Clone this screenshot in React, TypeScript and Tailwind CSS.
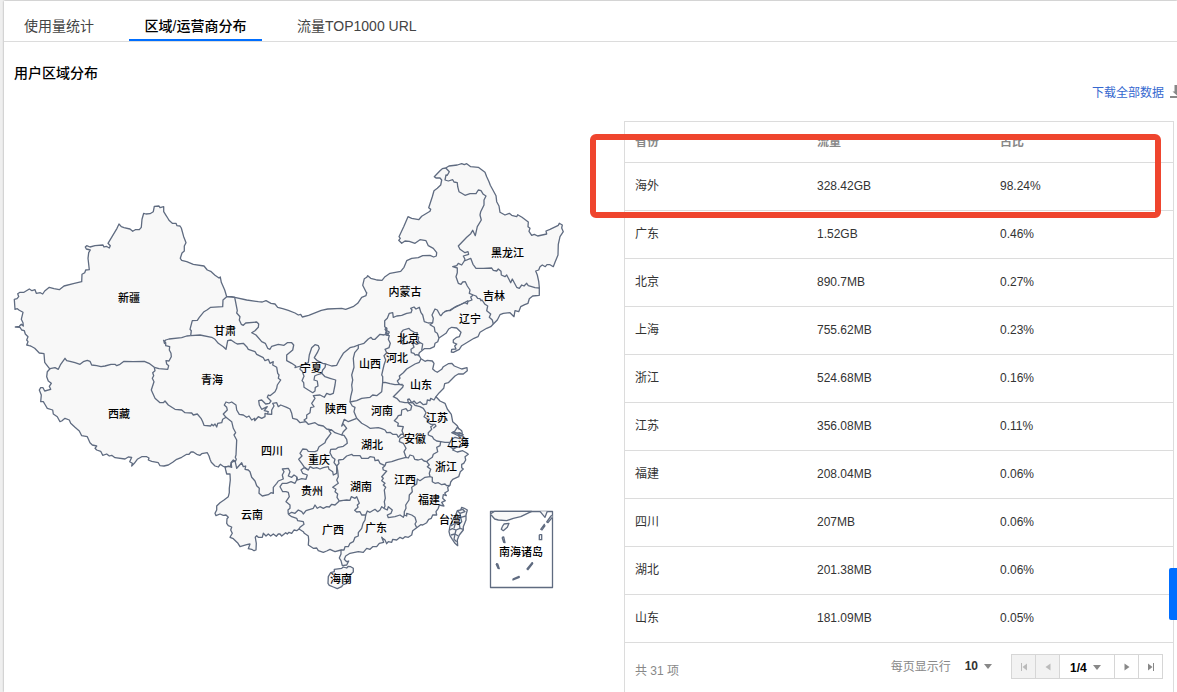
import React from "react";

type Point = [number, number];

// Border segments are stored in third-of-a-pixel units relative to a tile origin.
const seg = (ox: number, oy: number, data: string): Point[] =>
  data
    .trim()
    .split(/\s+/)
    .map((pair) => {
      const [x, y] = pair.split(",").map(Number);
      return [ox + x / 3, oy + y / 3] as Point;
    });

const toPath = (points: Point[], close = false) =>
  "M" + points.map(([x, y]) => `${x.toFixed(1)} ${y.toFixed(1)}`).join("L") + (close ? "Z" : "");

const nw = (d: string) => seg(0, 190, d);
const sw = (d: string) => seg(0, 340, d);
const mid = (d: string) => seg(180, 280, d);
const ne = (d: string) => seg(350, 150, d);
const east = (d: string) => seg(340, 300, d);
const south = (d: string) => seg(200, 400, d);
const se = (d: string) => seg(370, 400, d);

const mainland: Point[] = [
  ...nw(
    "148,535 134,517 132,491 118,489 104,475 92,468 88,467 80,465 84,455 80,450 84,440 76,432 73,422 65,420 60,412 46,411 58,409 64,403 70,408 69,398 64,388 69,367 58,361 52,356 45,358 43,328 51,326 56,320 53,311 60,307 72,307 88,297 96,302 105,299 109,310 121,308 128,312 134,303 148,292 162,296 178,299 192,288 220,281 245,275 246,253 254,248 257,240 268,239 264,205 266,188 271,180 259,177 256,171 260,167 270,171 285,167 309,165 312,171 319,169 328,174 331,167 324,160 342,130 351,115 357,102 364,110 372,113 390,117 398,124 406,119 418,119 424,112 426,88 431,70 438,72 450,71 460,65 463,49 477,48 480,53 491,50 491,65 498,76 503,84 507,91 517,100 528,100 531,107 540,108 544,114 551,140 554,148 558,158 553,168 553,183 546,189 541,205 545,211 560,215 580,223 612,228 622,240 632,244 645,256 657,264 661,261 664,277 674,300 680,320"
  ),
  ...mid(
    "164,52 200,60 235,65 247,66 258,62 273,70 285,72 293,82 308,86 325,91 345,99 355,105 362,103 367,111 386,106 424,91 443,87 485,85 497,88 521,79 533,70 545,52 558,47 560,38"
  ),
  ...ne(
    "50,430 38,406 43,386 50,382 53,377 62,385 74,388 80,390 96,391 105,380 120,370 152,364 162,352 170,332 185,325 205,323 218,317 240,316 251,321 259,318 260,308 250,295 235,287 228,272 210,269 195,280 178,274 165,273 155,280 146,271 151,265 147,260 161,230 174,200 185,205 206,209 215,199 240,184 242,178 236,173 247,140 252,122 262,115 272,105 275,90 270,84 258,84 253,80 270,62 277,56 287,54 297,48 322,45 335,41 343,44 350,41 362,50 385,52 405,67 410,80 417,95 421,106 430,122 438,137 440,155 447,168 450,187 465,195 478,190 485,196 500,200 503,194 516,202 535,216 534,230 540,235 537,244 545,256 553,253 563,258 590,252 588,243 600,238 625,226 628,220 637,225 635,234 640,245 630,260 625,283 624,315 615,337 610,350 600,344 591,344 586,350 577,345 570,350 566,360 557,363 562,375 566,394 568,412 568,436 548,438 538,446 534,460 524,464 512,470 506,485 495,482 492,500 480,488 460,490 450,494 442,510 430,522"
  ),
  ...east(
    "460,72 452,80 440,85 420,97 414,110 402,115 365,137 358,148 340,157 334,156 335,148 348,147 344,138 350,132 340,128 340,120 350,112 358,110 363,97 350,84 335,82 326,87 318,100 297,114 293,125 285,130 283,140 270,146 253,146 238,158 236,164 243,176 255,184 262,181 277,183 282,190 278,207 285,213 292,217 305,208 310,200 325,191 335,190 343,198 365,207 381,203 382,212 370,222 355,222 345,228 325,248 314,251 311,265 298,278 288,290 300,303 315,310 322,327 334,343 338,365 352,377 357,387"
  ),
  ...se(
    "262,82 275,92 277,100 266,102 250,95 245,98 260,105 278,108 290,120 287,132 272,140 256,143 248,150 262,156 278,152 289,158 295,163 285,170 287,180 281,190 275,193 275,203 280,207 271,215 266,230 248,238 242,246 240,256 233,262 235,272 224,279 229,287 220,284 218,295 226,302 215,307 222,318 208,315 205,325 198,335 200,345 188,345 184,355 176,358 170,368 158,375 152,374 140,383 128,392 125,405 115,412 105,410 98,416 90,412 80,420 68,418 65,427 55,425 50,431 45,420 38,415 35,412 41,427 28,430 20,440 8,440 0,448"
  ),
  ...south(
    "500,445 490,457 475,455 450,460 437,468 433,478 440,485 446,483 440,495 427,497 423,482 418,474 423,462 423,450 405,455 398,452 390,448 380,453 370,457 355,452 350,444 340,445 325,435 326,420 325,408 313,400 310,395 297,387 290,392 282,390 275,400 267,397 262,402 257,398 245,408 240,402 235,402 229,409 220,402 212,408 205,402 198,408 190,400 187,412 175,412 170,407 166,412 169,430 168,450 162,452 155,448 145,446 150,432 140,434 120,440 114,430 100,416 90,412 97,400 92,390 95,381 85,377 80,370 81,356 85,352 78,345 70,346 60,342 48,347 45,340 50,330 50,318 60,308 72,300 85,290 88,278 88,265 91,240 90,222 80,222 77,210 75,200"
  ),
  ...sw(
    "675,382 668,378 661,373 655,381 645,378 634,367 630,358 627,348 622,338 605,341 600,346 590,343 580,336 573,336 567,343 560,343 545,352 530,358 518,367 505,375 492,378 480,377 475,368 455,364 445,360 447,354 440,350 425,350 412,358 403,370 395,378 397,370 389,365 395,352 385,351 375,357 345,353 335,346 328,348 320,342 308,346 302,334 290,330 285,325 290,318 277,315 270,308 262,290 245,287 238,273 225,262 212,250 208,240 195,235 185,243 180,245 172,230 160,222 158,210 142,205 136,195 130,185 122,185 124,165 118,150 122,143 129,143 134,153 152,148 148,139 154,130 145,123 140,110 142,95 150,86"
  ),
];

const innerBorders: Point[][] = [
  sw(
    "150,86 165,83 175,88 182,73 195,55 200,62 210,64 225,68 240,73 250,65 262,61 270,64 275,75 290,77 303,80 315,78 333,73 345,73 350,77 360,73 372,64 400,65 433,64 447,70 463,82"
  ),
  sw(
    "463,82 465,92 458,98 461,107 457,115 462,125 454,150 465,175 480,188 490,188 495,183 505,195 525,208 545,210 555,218 575,219 580,225 592,222 603,235 608,245 612,256 632,258 635,253 640,257 645,252 650,261 653,250 665,248 668,238 678,232 695,245 700,265 707,278 702,285 710,300 708,345 706,352 709,358 706,365 700,360 693,368 695,382 685,378 675,382"
  ),
  sw("463,82 477,86 503,88 506,77 500,72 498,62 507,63 514,50 513,40 508,30 509,20 497,17 497,8 490,0"),
  nw("494,462 492,455 497,450 507,447 545,443 560,438 572,437"),
  nw("572,437 574,422 570,418 577,392 592,391 598,382 612,365 622,359 632,352 668,350 669,330 680,320 695,320 705,322"),
  mid(
    "164,52 172,92 170,99 180,110 178,120 184,133 190,136 197,129 230,126 236,132 235,142 225,152 215,158 228,165 245,185 256,190 263,205 270,208 275,199 295,193 312,196 322,188 335,188 341,195 338,210 320,225 320,242 335,250 347,258 345,263 362,258"
  ),
  mid(
    "362,258 385,248 388,225 395,203 405,194 415,197 418,205 412,218 403,233 412,242 428,250 437,252 435,262 428,270 425,280 410,285 404,288 402,300 412,303 414,318 406,322 405,333 398,338 385,330 372,322 371,308 366,302 372,289 367,274 360,268 362,258"
  ),
  mid(
    "425,280 435,290 450,295 467,300 465,315 460,340 450,344 440,340 433,352 420,345 400,347 405,355 395,370 402,380 392,383 390,398 380,405 380,415 372,420 378,425"
  ),
  mid("437,252 455,258 470,256 478,240 490,220 510,203 523,200 535,195 535,205 524,218 520,235 522,262 515,285 518,300 515,315 517,330 512,350 510,366 517,378 525,382 522,395 530,415"),
  mid("378,425 385,433 405,428 415,435 430,438 440,447 455,450 465,458 485,465 490,455 500,445 490,432 485,438 493,418 505,425 530,415"),
  mid("535,195 552,190 565,177 573,172 578,178 585,178 600,163 612,165 622,160 615,148 620,143"),
  east(
    "135,98 145,103 148,96 140,92 140,85 134,80 134,62 142,55 148,40 158,38 160,52 170,48 185,46 200,40 213,38 216,30 212,25 222,21 228,27 238,22 243,38 248,45 253,65 265,69 278,68 280,55 276,45 285,27 292,30 300,45 303,47 310,38 320,32 330,32 345,22 360,15 375,7 385,2"
  ),
  ne("283,485 300,480 320,468 335,462 345,458 352,462 354,454 366,450 362,441 370,435"),
  east("278,68 270,74 283,82 285,95 292,100 297,114"),
  ne(
    "287,54 293,60 298,65 292,76 288,75 285,90 295,93 308,89 312,96 322,98 323,110 327,125 335,130 345,136 360,131 378,131 385,120 393,122 400,133 408,138 402,150 402,165 392,185 390,195 394,210 382,230 376,257 368,241 362,251 350,262 325,288 330,298 345,308 354,305 356,313 340,318 345,328 343,333"
  ),
  ne(
    "343,333 362,325 369,343 378,355 400,355 425,354 430,361 440,363 445,357 453,364 454,375 465,380 470,375 482,398 487,387 500,412 508,415 515,405 522,408 530,400 535,407 545,410 555,413 568,414"
  ),
  ne("343,333 335,345 325,340 320,347 308,350 322,354 322,368 318,380 325,400 333,403 338,396 346,395 352,408 360,420 358,430 370,435"),
  ne("370,435 378,438 383,445 390,446 393,452 396,450 405,463 413,468 410,482 422,492 418,502 427,510 430,522"),
  mid("620,143 618,165 628,167 625,178 631,190 627,203 615,208 620,218 612,227 617,240 612,255 605,285 608,290 608,305 605,335 590,347 578,345 570,352 545,355 530,362 510,366"),
  east("127,248 135,247 150,251 165,254 188,253"),
  east("178,253 172,243 180,235 178,228 190,218 200,207 225,192 238,187 243,176"),
  east("178,253 190,256 188,262 175,275 160,290 170,295 180,305 195,308 205,308 203,298 208,297 215,308 222,303 230,311 240,305 250,314 260,312 262,300 270,302 272,295 282,300 288,290"),
  east("183,98 190,90 207,85 212,91 223,97 232,98 230,108 236,112 234,122 240,128 230,133 215,125 200,130 188,132 184,125 192,118 184,110 183,98"),
  east("218,130 222,142 213,148 214,158 222,160 225,165 232,164 237,168"),
  east("240,128 248,132 245,150"),
  east("205,308 215,318 212,330 203,333 198,326 185,330 184,345 175,347 170,355 163,362 175,370 173,378 190,380 186,392 190,402"),
  east("50,355 65,370 80,378 90,385 115,383 125,386 135,390 140,398 150,397 158,403 170,403 175,412 183,403 190,402 193,410 180,415 178,425 190,430 198,445 192,455 198,472"),
  east("205,308 218,308 225,316 240,320 250,325 258,338 252,350 262,357 262,365 272,373 285,373 288,378 280,385"),
  se("190,76 182,80 185,88 175,98 175,105 187,110 192,118 200,123 212,125 210,137 200,142 203,155 190,163 187,172 175,180 170,185"),
  se("212,125 225,127 240,127 245,118 255,112 270,116"),
  se("240,127 235,138 248,145 260,142"),
  se("262,82 250,100 270,98 280,104 265,110"),
  se("45,197 48,188 65,185 85,178 108,172 115,174 120,165 130,168 134,178 145,180 155,177 162,183 170,185 178,195 172,200 182,208 178,220 180,230 187,232 187,245 195,250 205,248 215,254 225,252 230,257 240,256"),
  se("180,230 165,232 150,242 142,237 140,252 125,262 127,275 118,285 117,300 107,315 108,325 103,335 103,345"),
  se("45,197 38,203 40,210 50,213 35,230 40,235 35,242 45,250 40,255 47,262 43,270 46,295 43,305 45,318 42,325 52,330 55,320 67,330 63,340 52,345 55,353 75,350 90,345 100,352 103,345 110,348 110,340 125,345 135,352 139,365 135,372 140,383"),
  south("415,180 430,178 440,168 455,163 460,167 480,167 485,175 505,175 510,170 523,172 525,182 535,180 540,190 555,197"),
  south("415,180 417,190 410,198 413,212 415,230 410,240 415,250 398,262 408,268 405,275 413,282 411,292 418,303"),
  south("418,303 430,301 440,300 450,301 454,290 465,295 470,290 478,310 472,315 474,322 464,331 470,336 480,335 485,345 497,345 502,333 510,337 525,328 533,335 540,330 545,320 552,325"),
  south("497,345 495,360 489,370 485,385 475,398 475,408 465,412 460,425 450,430 445,440 435,440 432,450 423,450"),
  south("265,343 275,337 285,340 295,330 305,335 310,342 318,332 340,325 345,315 352,325 360,320 370,325 380,320 388,321 395,313 405,315 418,303"),
  south("265,343 264,330 270,325 270,315 262,308 258,305 268,290 265,277 258,275 248,275 240,260 247,250 260,250 273,245 285,250 290,240 290,230"),
  south("290,230 293,240 305,236 318,238 322,225 308,220 303,210 312,203 325,210 330,200 340,205 350,203 360,207 370,203 385,200 387,208 398,215 400,225 410,220 410,198"),
  south("325,210 312,200 305,190 296,178 306,168 300,160 308,147 320,148 325,154 345,155 352,152 357,140 375,128 378,120 393,100 387,92 395,90"),
  south("425,105 432,106 440,118 442,130 430,139 415,142 408,147 392,148 390,158 397,172 405,178 402,188 410,198"),
  south("75,200 90,200 95,187 105,182 110,205 125,188 130,200 137,198 135,208 145,210 150,215 155,232 165,243 170,257 178,265 177,280 187,288 205,284 213,278 220,280 220,262 230,250 235,243 250,237 247,225 252,215 247,207 265,205 270,215 265,228 275,232 282,225 290,230"),
  south("265,343 275,350 290,355 293,362 310,365 312,373 300,382 297,387"),
  mid("138,412 130,402 142,390 140,382 133,375 138,366 147,369 155,366 168,375 170,390 178,403 190,405 200,412 207,408 215,420 224,415 224,422 235,410 245,415 255,410 255,400 262,402"),
  mid("32,167 60,165 95,172 105,178 115,190 130,200 138,208 143,182 153,180 165,188 172,192 190,190 200,200 205,208 225,215 230,223 250,233 255,242 265,238 270,250 280,245 278,255 290,262 293,280 297,285 295,295 302,300 292,315 290,325 285,335 270,347 265,345 262,352 273,363 268,370 257,372 245,360 236,362 238,375 245,388 262,380 253,392 265,395 262,402 275,403 275,390 282,378 278,370 290,368 295,380 302,375 320,382 330,387 335,400 338,415 350,418 360,428 378,425"),
];

const hainan = south("385,530 392,518 403,515 403,508 425,505 430,501 440,504 445,499 452,500 460,505 460,516 450,525 448,540 440,550 428,555 425,560 412,566 400,561 388,556 384,550 385,530");
const taiwan = se("237,395 240,378 250,358 255,350 262,332 272,330 275,322 283,325 292,330 288,345 288,360 280,380 280,390 268,405 262,420 263,437 255,430 247,418 240,407");
const taiwanLines = [
  se("262,332 270,340 285,335 278,328 272,330"),
  se("270,340 272,352 260,356 250,358"),
  se("272,352 288,348"),
  se("272,352 275,365 268,372 256,370 242,378"),
  se("268,372 270,385 258,390 247,386 239,390"),
  se("258,390 255,402 243,405"),
  se("255,402 265,408"),
  se("270,385 280,388"),
  se("256,370 252,385"),
  se("255,402 252,418 260,425"),
];

const inset = [
  se("361,342 374,334 400,334 485,334 452,350 430,355 410,362 385,360 374,357 361,342"),
  se("510,334 525,352 532,334"),
  se("397,380 402,372 417,370 412,382 400,392 394,388 397,380"),
  se("547,346 543,348 530,366 534,368 547,352"),
  se("524,372 512,388 516,390 526,376"),
  se("508,404 515,404 515,419 508,419 508,404"),
  se("396,412 401,411 405,428 401,427 396,412"),
  se("378,491 383,492 388,506 384,505 378,491"),
  se("487,487 471,507 474,509 488,491 487,487"),
  se("428,537 447,529 448,532 429,540 428,537"),
];

const labels: [string, number, number][] = [
  ["新疆", 129, 298], ["甘肃", 225, 331], ["青海", 212, 380], ["西藏", 119, 414],
  ["宁夏", 311, 368], ["陕西", 336, 409], ["内蒙古", 405, 292], ["黑龙江", 507.5, 253],
  ["吉林", 494, 296], ["辽宁", 470, 319], ["北京", 408, 339], ["河北", 397, 358],
  ["山西", 370, 364], ["山东", 421, 385], ["河南", 382, 411], ["江苏", 437, 418],
  ["安徽", 415, 439], ["上海", 458, 443], ["浙江", 446, 467], ["湖北", 372, 445],
  ["四川", 272, 451], ["重庆", 319, 460], ["贵州", 312, 491], ["湖南", 361, 487],
  ["江西", 405, 480], ["福建", 429, 500], ["云南", 252, 515], ["广西", 333, 530],
  ["广东", 376, 528], ["台湾", 450, 520], ["海南", 341, 579], ["南海诸岛", 521, 552],
];

function ChinaMap() {
  return (
    <svg width="600" height="500" viewBox="4 100 600 500" className="block">
      <g fill="#f8f8f8" stroke="#5f6b80" strokeWidth="1.3" strokeLinejoin="round">
        <path d={toPath(mainland, true)} />
        <path d={toPath(hainan, true)} />
        <path d={toPath(taiwan, true)} />
        <g fill="none">
          {[...innerBorders, ...taiwanLines].map((line, i) => (
            <path key={i} d={toPath(line)} />
          ))}
        </g>
        <rect x="490.5" y="511.5" width="62" height="76" fill="#ffffff" />
        {inset.map((line, i) => (
          <path key={i} d={toPath(line)} />
        ))}
      </g>
      <g fill="#000000" fontSize="11" textAnchor="middle" className="font-medium">
        {labels.map(([name, x, y]) => (
          <text key={name} x={x} y={y + 4.3}>
            {name}
          </text>
        ))}
      </g>
    </svg>
  );
}

const rows = [
  ["海外", "328.42GB", "98.24%"],
  ["广东", "1.52GB", "0.46%"],
  ["北京", "890.7MB", "0.27%"],
  ["上海", "755.62MB", "0.23%"],
  ["浙江", "524.68MB", "0.16%"],
  ["江苏", "356.08MB", "0.11%"],
  ["福建", "208.04MB", "0.06%"],
  ["四川", "207MB", "0.06%"],
  ["湖北", "201.38MB", "0.06%"],
  ["山东", "181.09MB", "0.05%"],
];

function Caret({ className = "" }: { className?: string }) {
  return (
    <svg width="8" height="5" viewBox="0 0 8 5" className={className}>
      <path d="M0 0h8L4 5z" fill="#888" />
    </svg>
  );
}

function PageIcon({ forward, edge, color }: { forward: boolean; edge: boolean; color: string }) {
  return (
    <svg width="8" height="8" viewBox="0 0 8 8" className={forward ? "" : "-scale-x-100"}>
      <path d={edge ? "M1 .5 5.5 4 1 7.5z" : "M1.5 .5 6.5 4 1.5 7.5z"} fill={color} />
      {edge && <path d="M6.5 0v8" stroke={color} />}
    </svg>
  );
}

function UsageTable() {
  return (
    <div className="relative h-[580px] w-[550px] border border-[#dcdcdc] text-xs text-[#333]">
      <div className="grid h-10 grid-cols-[182px_183px_1fr] items-center pl-[10px] font-bold text-[#888]">
        <span>省份</span>
        <span>流量</span>
        <span>占比</span>
      </div>
      {rows.map(([area, traffic, share]) => (
        <div
          key={area}
          className="grid h-12 grid-cols-[182px_183px_1fr] items-center border-t border-[#dcdcdc] pb-0.5 pl-[10px]"
        >
          <span>{area}</span>
          <span>{traffic}</span>
          <span>{share}</span>
        </div>
      ))}
      <div className="flex h-12 items-center border-t border-[#dcdcdc] pl-[10px] pr-[10px] text-[#888]">
        <span className="mt-2">共 31 项</span>
        <span className="ml-auto">每页显示行</span>
        <b className="-mt-0.5 ml-[14px] text-[#333]">10</b>
        <Caret className="ml-[6px]" />
        <div className="ml-[19px] flex h-[25px] w-[152px] border border-[#d6d6d6]">
          <span className="flex w-6 items-center justify-center border-r border-[#d6d6d6] bg-[#f2f2f2]">
            <PageIcon forward={false} edge color="#bbb" />
          </span>
          <span className="flex w-6 items-center justify-center border-r border-[#d6d6d6] bg-[#f2f2f2]">
            <PageIcon forward={false} edge={false} color="#bbb" />
          </span>
          <span className="flex w-[55px] items-center border-r border-[#d6d6d6] pl-[10px] pt-0.5">
            <b className="text-black">1/4</b>
            <Caret className="ml-[6px]" />
          </span>
          <span className="flex w-6 items-center justify-center border-r border-[#d6d6d6]">
            <PageIcon forward edge={false} color="#888" />
          </span>
          <span className="flex flex-1 items-center justify-center">
            <PageIcon forward edge color="#888" />
          </span>
        </div>
      </div>
      <div className="absolute left-[-35.5px] top-[12px] h-[83.5px] w-[571.5px] rounded-[6px] border-6 border-[#ef452e]" />
    </div>
  );
}

export default function App() {
  return (
    <div className="relative h-[692px] w-[1177px] overflow-hidden bg-[#efefef] pl-1 pt-px font-['Liberation_Sans','Noto_Sans_CJK_SC',sans-serif]">
      <div className="h-full w-[1173px] bg-white shadow-[0_0_2px_rgba(0,0,0,0.35)]">
        <nav className="flex h-[41px] whitespace-nowrap border-b border-[#dcdcdc] text-sm text-[#444]">
          <span className="flex w-[125px] items-center pl-5 pt-[9px]">使用量统计</span>
          <span className="relative flex w-[133px] items-center justify-center pt-[9px] font-medium text-black">
            区域/运营商分布
            <i className="absolute inset-x-0 bottom-0 h-0.5 bg-[#006eff]" />
          </span>
          <span className="flex items-center pl-[35px] pt-[9px]">流量TOP1000 URL</span>
        </nav>
        <div className="flex">
          <section className="w-[620px] shrink-0">
            <h2 className="h-[58px] pl-[10px] pt-[21px] text-sm font-medium text-black">用户区域分布</h2>
            <ChinaMap />
          </section>
          <section className="w-[553px] shrink-0">
            <div className="flex h-[79px] items-start justify-end overflow-hidden pt-[43px]">
              <a className="mr-[6px] shrink-0 text-xs text-[#3568cf]">下载全部数据</a>
              <svg width="7" height="14" viewBox="0 0 7 14" className="shrink-0">
                <path d="M4.5 0H7v10.5L2.5 6.5h2z" fill="#888" />
                <path d="M0 11h7v2H0z" fill="#888" />
              </svg>
            </div>
            <UsageTable />
          </section>
        </div>
      </div>
      <div className="absolute right-0 top-[568px] h-[52px] w-2 rounded-l-xs bg-[#006eff]" />
    </div>
  );
}
